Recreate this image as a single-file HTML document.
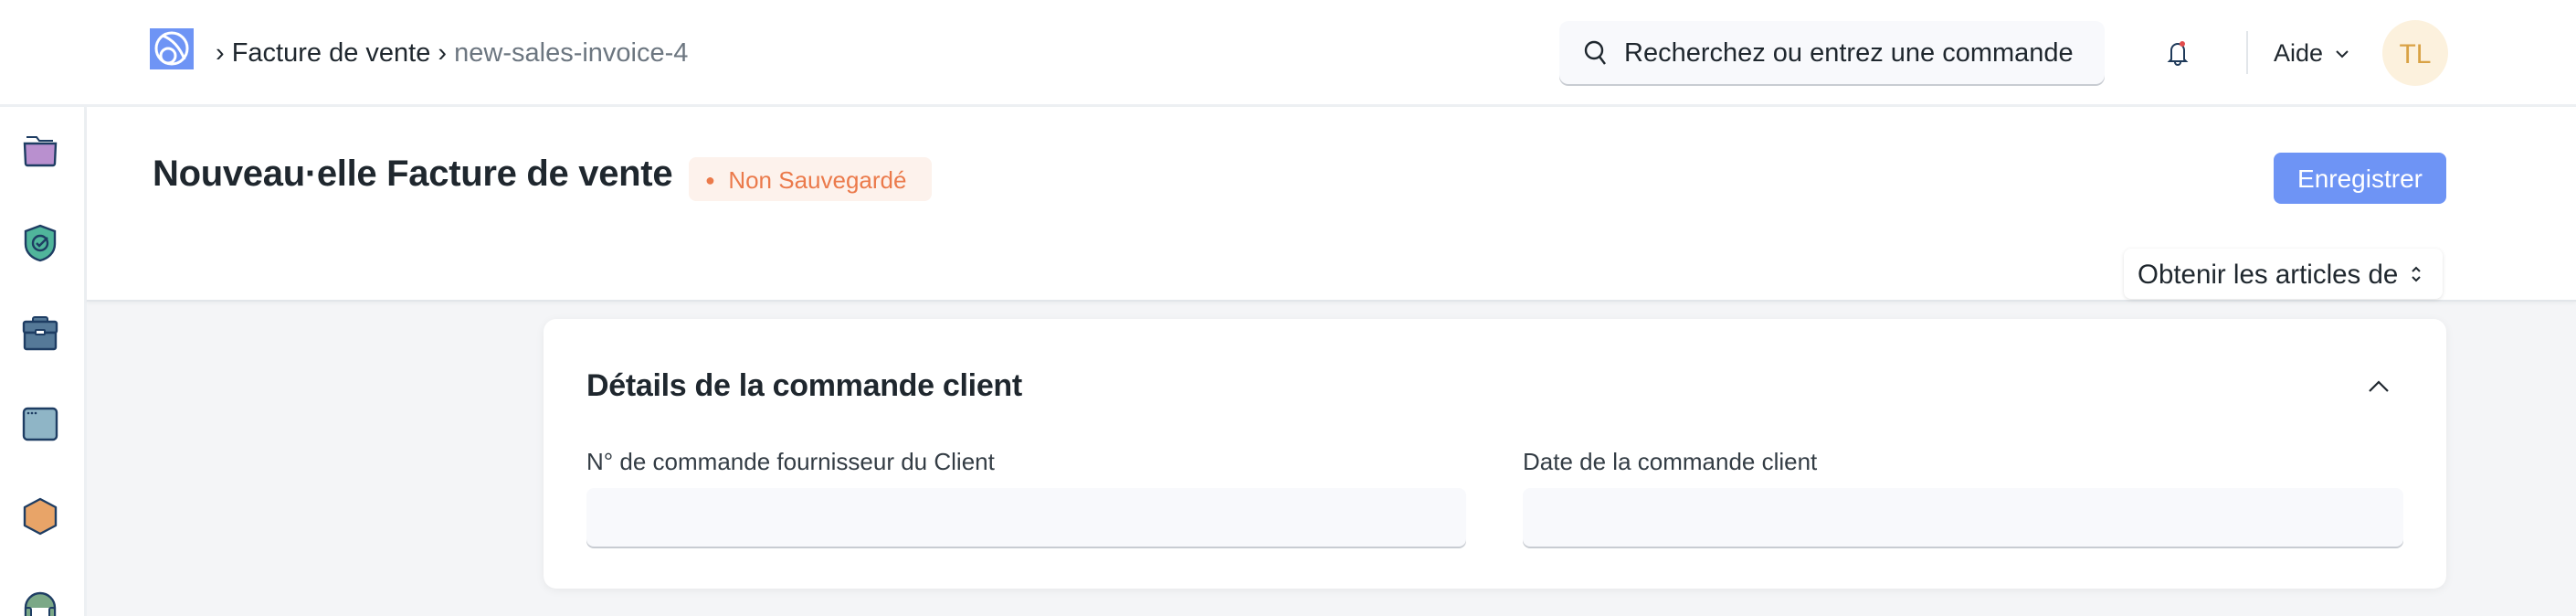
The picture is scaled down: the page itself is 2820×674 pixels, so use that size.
<!DOCTYPE html>
<html><head><meta charset="utf-8"><style>
*{margin:0;padding:0;box-sizing:border-box}
body{width:2820px;height:674px;overflow:hidden;background:#f4f5f7;font-family:"Liberation Sans",sans-serif;color:#1f272e;position:relative}
.abs{position:absolute}
#hdr{left:0;top:0;width:2820px;height:117px;background:#fff;border-bottom:3px solid #edf0f3}
#side{left:0;top:117px;width:95px;height:557px;background:#fff;border-right:3px solid #edf0f3}
#ph{left:95px;top:117px;width:2725px;height:213px;background:#fff;border-bottom:2px solid #e2e6ea;box-shadow:0 2px 4px rgba(0,0,0,.04)}
.t{white-space:nowrap}
</style></head><body>
<div id="hdr" class="abs"></div>
<svg class="abs" style="left:164px;top:31px" width="48" height="45" viewBox="0 0 48 45"><rect width="48" height="45" fill="#6e94f5"/><circle cx="24" cy="22" r="17" fill="none" stroke="#fff" stroke-width="3"/><circle cx="20" cy="30" r="8" fill="none" stroke="#fff" stroke-width="3"/><path d="M14 8 Q30 14 38 34" fill="none" stroke="#fff" stroke-width="3"/></svg>
<div class="abs t" style="left:236px;top:42px;font-size:29px;color:#1f272e">›&nbsp;Facture de vente&nbsp;<span>›</span>&nbsp;<span style="color:#6c7680">new-sales-invoice-4</span></div>
<div class="abs" style="left:1707px;top:23px;width:597px;height:69px;background:#f8f9fc;border-radius:10px;box-shadow:0 2px 0 #c8ccd2"></div>
<svg class="abs" style="left:1733px;top:42px" width="28" height="32" viewBox="0 0 28 32"><circle cx="12" cy="13" r="9" fill="none" stroke="#1f272e" stroke-width="2.4"/><path d="M18 20 L24 28" stroke="#1f272e" stroke-width="2.4"/></svg>
<div class="abs t" style="left:1778px;top:42px;font-size:29px;color:#1f272e">Recherchez ou entrez une commande</div>
<svg class="abs" style="left:2370px;top:42px" width="28" height="32" viewBox="0 0 28 32"><path d="M7 23 V13 a7 7 0 0 1 14 0 V23 L23 25 H5 Z M11 26 a3 3 0 0 0 6 0" fill="none" stroke="#1f3a5a" stroke-width="2"/><circle cx="19" cy="6" r="3" fill="#e24c4c"/></svg>
<div class="abs" style="left:2459px;top:34px;width:2px;height:47px;background:#e2e6ea"></div>
<div class="abs t" style="left:2489px;top:43px;font-size:27px">Aide</div>
<svg class="abs" style="left:2556px;top:53px" width="16" height="12" viewBox="0 0 16 12"><path d="M2 3 L8 9 L14 3" fill="none" stroke="#1f272e" stroke-width="2"/></svg>
<div class="abs" style="left:2608px;top:22px;width:72px;height:72px;border-radius:50%;background:#fcf1dd;color:#d9a245;font-size:30px;text-align:center;line-height:76px">TL</div>

<div id="side" class="abs"></div>
<svg class="abs" style="left:24px;top:145px" width="40" height="40" viewBox="0 0 40 40"><path d="M5 5 H16 L19 9 H34" fill="none" stroke="#1e3d63" stroke-width="2"/><path d="M3 12 H37 L36 34 a2 2 0 0 1-2 2 H6 a2 2 0 0 1-2-2 Z" fill="#b990cf" stroke="#1e3d63" stroke-width="2.4"/></svg>
<svg class="abs" style="left:25px;top:245px" width="38" height="42" viewBox="0 0 38 42"><path d="M19 2 L35 8 V22 C35 32 27 38 19 40 C11 38 3 32 3 22 V8 Z" fill="#50b59b" stroke="#1e3d63" stroke-width="2.4"/><circle cx="19" cy="21" r="8" fill="none" stroke="#1e3d63" stroke-width="2.4"/><path d="M15 21 L18 24 L27 15" fill="none" stroke="#1e3d63" stroke-width="2.4"/></svg>
<svg class="abs" style="left:24px;top:345px" width="40" height="40" viewBox="0 0 40 40"><rect x="12" y="2" width="16" height="6" rx="2" fill="#557998" stroke="#1e3d63" stroke-width="2"/><rect x="2" y="7" width="36" height="12" rx="2" fill="#557998" stroke="#1e3d63" stroke-width="2.4"/><path d="M3 19 H37 V35 a2 2 0 0 1-2 2 H5 a2 2 0 0 1-2-2 Z" fill="#557998" stroke="#1e3d63" stroke-width="2.4"/><rect x="15" y="16" width="10" height="5" rx="1" fill="#fff" stroke="#1e3d63" stroke-width="2"/></svg>
<svg class="abs" style="left:24px;top:445px" width="40" height="38" viewBox="0 0 40 38"><rect x="2" y="2" width="36" height="34" rx="4" fill="#8fb5c6" stroke="#1e3d63" stroke-width="2.4"/><circle cx="7" cy="7" r="1.3" fill="#1e3d63"/><circle cx="11" cy="7" r="1.3" fill="#1e3d63"/><circle cx="15" cy="7" r="1.3" fill="#1e3d63"/></svg>
<svg class="abs" style="left:24px;top:544px" width="40" height="42" viewBox="0 0 40 42"><path d="M20 2 L37 11 V31 L20 40 L3 31 V11 Z" fill="#e8a468" stroke="#1e3d63" stroke-width="2.4" stroke-linejoin="round"/></svg>
<svg class="abs" style="left:24px;top:645px" width="40" height="29" viewBox="0 0 40 29"><path d="M4 29 V20 a16 16 0 0 1 32 0 V29" fill="#7ba887" stroke="#1e3d63" stroke-width="2.4"/><rect x="10" y="20" width="20" height="9" fill="#fff"/><rect x="4" y="20" width="6" height="12" rx="2" fill="#7ba887" stroke="#1e3d63" stroke-width="2"/><rect x="30" y="20" width="6" height="12" rx="2" fill="#7ba887" stroke="#1e3d63" stroke-width="2"/></svg>

<div id="ph" class="abs"></div>
<div class="abs t" style="left:167px;top:168px;font-size:40px;font-weight:bold;letter-spacing:-0.3px">Nouveau·elle Facture de vente</div>
<div class="abs t" style="left:754px;top:172px;width:266px;height:48px;border-radius:8px;background:#fdf2ec;color:#eb7a4b;font-size:26px;line-height:50px;padding-left:18px"><span style="font-size:18px;position:relative;top:-3px">●</span>&nbsp; Non Sauvegardé</div>
<div class="abs t" style="left:2489px;top:167px;width:189px;height:56px;border-radius:8px;background:#6e94f5;color:#fff;font-size:28px;text-align:center;line-height:58px">Enregistrer</div>
<div class="abs t" style="left:2325px;top:272px;width:349px;height:55px;border-radius:8px;background:#fff;box-shadow:0 1px 4px rgba(0,0,0,.12);font-size:29.5px;line-height:57px;padding-left:15px">Obtenir les articles de</div>
<svg class="abs" style="left:2638px;top:288px" width="14" height="24" viewBox="0 0 14 24"><path d="M3 9 L7 5 L11 9 M3 15 L7 19 L11 15" fill="none" stroke="#1f272e" stroke-width="2"/></svg>

<div class="abs" style="left:595px;top:349px;width:2083px;height:295px;background:#fff;border-radius:14px;box-shadow:0 2px 10px rgba(0,0,0,.06)"></div>
<div class="abs t" style="left:642px;top:403px;font-size:34px;font-weight:bold;letter-spacing:-0.3px">Détails de la commande client</div>
<svg class="abs" style="left:2591px;top:414px" width="26" height="18" viewBox="0 0 26 18"><path d="M3 14 L13 4 L23 14" fill="none" stroke="#1f272e" stroke-width="2.2"/></svg>
<div class="abs t" style="left:642px;top:490px;font-size:26px;color:#333c44">N° de commande fournisseur du Client</div>
<div class="abs t" style="left:1667px;top:490px;font-size:26px;color:#333c44">Date de la commande client</div>
<div class="abs" style="left:642px;top:534px;width:963px;height:64px;border-radius:8px;background:#f8f9fc;box-shadow:0 2px 0 #c8ccd2"></div>
<div class="abs" style="left:1667px;top:534px;width:964px;height:64px;border-radius:8px;background:#f8f9fc;box-shadow:0 2px 0 #c8ccd2"></div>
</body></html>
